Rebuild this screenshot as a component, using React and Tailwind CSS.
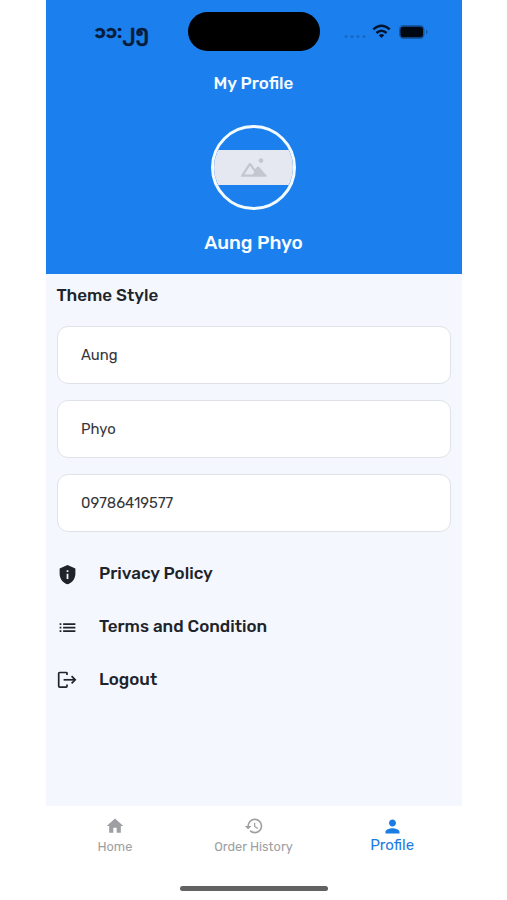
import React from "react";
import { MdHistory, MdHome, MdList, MdPerson, MdPrivacyTip } from "react-icons/md";

const fields = ["Aung", "Phyo", "09786419577"];

function LogoutIcon() {
  return (
    <svg width="20" height="20" viewBox="0 0 20 20" fill="none" stroke="currentColor" strokeWidth="1.7">
      <path d="M10 5V3.4Q10 2.5 9.1 2.5H2.8Q1.7 2.5 1.7 3.6V16Q1.7 17.1 2.8 17.1H9.1Q10 17.1 10 16.2V14.6" />
      <path d="M6.6 9.8H17.6" />
      <path d="M14.6 6.2L18.2 9.8L14.6 13.4" />
    </svg>
  );
}

function StatusBar() {
  return (
    <div className="flex h-[39px] w-full items-center">
      <div className="w-[142px] pt-[5px] pl-[49px] font-['Noto_Sans_Myanmar','Noto_Sans','DejaVu_Sans',sans-serif] text-[18px] leading-none font-bold text-[#071b3b] [-webkit-text-stroke:0.5px_#071b3b]">
        ၁၁:၂၅
      </div>
      <div className="h-[39px] w-[132px] rounded-full bg-black" />
      <svg className="ml-[22px]" width="90" height="20" viewBox="0 0 90 20">
        <g fill="#1767c8">
          <circle cx="4" cy="14.5" r="1.5" />
          <circle cx="10" cy="14.5" r="1.5" />
          <circle cx="16" cy="14.5" r="1.5" />
          <circle cx="22" cy="14.5" r="1.5" />
        </g>
        <g fill="none" stroke="#03142f" strokeWidth="2.4">
          <path d="M31.3 7.4Q39.5 0.2 47.7 7.4" />
          <path d="M34.4 11Q39.5 6.4 44.6 11" />
        </g>
        <path d="M36.8 13.2Q39.5 11 42.2 13.2L39.5 16Z" fill="#03142f" />
        <rect x="57" y="3" width="25.5" height="14" rx="4.5" fill="#1558a6" />
        <rect x="58.5" y="4.8" width="22.5" height="10.4" rx="2.8" fill="#000814" />
        <path d="M84 7.8Q87 10 84 12.2Z" fill="#1558a6" />
      </svg>
    </div>
  );
}

function Avatar() {
  return (
    <div className="flex h-[85px] w-[85px] items-center overflow-hidden rounded-full border-3 border-[#f4fbff]">
      <div className="flex h-[35px] w-full items-center justify-center bg-[#e5e8f1]">
        <svg width="28" height="21" viewBox="0 0 28 21" fill="#c3c6ce">
          <path fillRule="evenodd" d="M1.2 19.8Q0.4 19.8 0.9 18.8L8.8 6.6Q10 5.2 11.2 6.6L15 12.2L17.3 9.8Q18.3 9 19.2 10L26.8 18.8Q27.4 19.8 26.2 19.8ZM4.4 17.4H12.6L14.4 15L10 8.8Z" />
          <circle cx="21" cy="3.6" r="2.3" />
        </svg>
      </div>
    </div>
  );
}

function MenuItem({ icon, label }) {
  return (
    <button className="flex h-[53px] w-full items-center text-left">
      <span className="flex w-[42.5px] items-center">{icon}</span>
      <span className="text-[17px] font-medium">{label}</span>
    </button>
  );
}

export default function App() {
  return (
    <div className="flex h-[900px] w-[507px] justify-center overflow-hidden bg-white font-['Rubik','Roboto',sans-serif] text-[#202329]">
      <div className="flex h-full w-[416px] flex-col">
        {/* Profile header */}
        <header className="flex h-[274px] shrink-0 flex-col items-center bg-[#1b80ee] pt-[12px] text-[#f6fcff]">
          <StatusBar />
          <h1 className="mt-[20px] text-[17px] leading-6 font-medium">My Profile</h1>
          <div className="mt-[30px]">
            <Avatar />
          </div>
          <h2 className="mt-[19px] text-[19px] leading-7 font-medium">Aung Phyo</h2>
        </header>

        <main className="flex-1 bg-[#f4f7fe] px-[11px]">
          <h3 className="mt-[9px] text-[17px] leading-6 font-medium">Theme Style</h3>
          <div className="mt-[19px] flex flex-col gap-4">
            {fields.map((value) => (
              <div
                key={value}
                className="flex h-[58px] items-center rounded-[11px] border border-[#dfe3e8] bg-white px-[23.5px] text-[14.8px] text-[#34363a]"
              >
                {value}
              </div>
            ))}
          </div>

          <div className="mt-[15.5px]">
            <MenuItem icon={<MdPrivacyTip size={21} />} label="Privacy Policy" />
            <MenuItem icon={<MdList size={21} />} label="Terms and Condition" />
            <MenuItem icon={<LogoutIcon />} label="Logout" />
          </div>
        </main>

        {/* Bottom tabs */}
        <nav className="grid h-[70px] shrink-0 grid-cols-3 bg-white pt-[10px] text-[12.75px] text-[#9e9fa2]">
          <div className="flex flex-col items-center">
            <MdHome size={20} className="ml-px" />
            <span className="mt-px leading-5">Home</span>
          </div>
          <div className="flex flex-col items-center">
            <MdHistory size={20} className="ml-[2px]" />
            <span className="mt-px leading-5">Order History</span>
          </div>
          <div className="flex flex-col items-center text-[#1b7ce3]">
            <MdPerson size={21} />
            <span className="-mt-[2px] text-[15px] leading-5">Profile</span>
          </div>
        </nav>
        <div className="flex h-6 shrink-0 justify-center bg-white pt-[10px]">
          <div className="h-[5px] w-[148px] rounded-full bg-[#626262]" />
        </div>
      </div>
    </div>
  );
}
